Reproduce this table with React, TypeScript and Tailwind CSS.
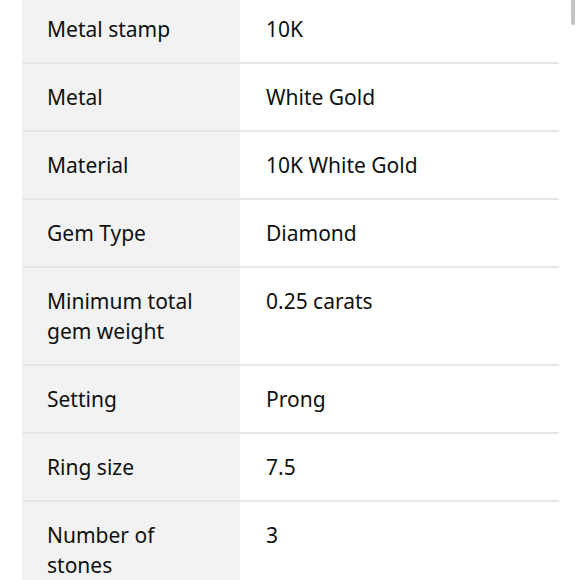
const rows: [string, string][] = [
  ["Metal stamp", "10K"],
  ["Metal", "White Gold"],
  ["Material", "10K White Gold"],
  ["Gem Type", "Diamond"],
  ["Minimum total gem weight", "0.25 carats"],
  ["Setting", "Prong"],
  ["Ring size", "7.5"],
  ["Number of stones", "3"],
];

export default function App() {
  return (
    <div className="relative h-[580px] w-[580px] overflow-hidden bg-white font-['Noto_Sans',sans-serif] text-[21px] leading-[30px] text-[#0f1111]">
      {/* scrollbar thumb */}
      <div className="absolute right-[5px] top-0 h-[25px] w-[4px] rounded-b-full bg-[#c4c4c4]" />

      <div className="ml-[22px] mr-[21px] -mt-[4px] flex flex-col">
        {rows.map(([label, value], i) => (
          <div
            key={label}
            className={`flex ${i < rows.length - 1 ? "border-b-2 border-[#e7e7e7]" : ""}`}
          >
            <div className="w-[218px] shrink-0 bg-[#f2f2f2] py-[18px] pl-[25px] pr-4">
              {label === "Minimum total gem weight" ? (
                <>Minimum total<br />gem weight</>
              ) : label === "Number of stones" ? (
                <>Number of<br />stones</>
              ) : (
                label
              )}
            </div>
            <div className="flex-1 py-[18px] pl-[26px] pr-4">{value}</div>
          </div>
        ))}
      </div>
    </div>
  );
}
